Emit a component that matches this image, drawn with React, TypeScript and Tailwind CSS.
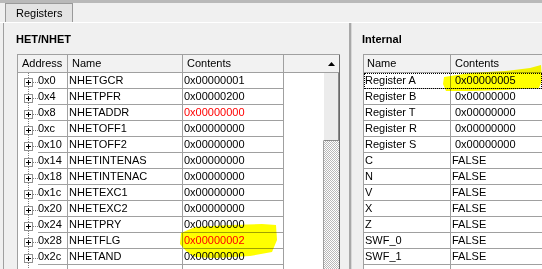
import React from 'react'

// registros del bloque HET/NHET
const hetRows = [
  { addr: '0x0', name: 'NHETGCR', value: '0x00000001' },
  { addr: '0x4', name: 'NHETPFR', value: '0x00000200' },
  { addr: '0x8', name: 'NHETADDR', value: '0x00000000', changed: true },
  { addr: '0xc', name: 'NHETOFF1', value: '0x00000000' },
  { addr: '0x10', name: 'NHETOFF2', value: '0x00000000' },
  { addr: '0x14', name: 'NHETINTENAS', value: '0x00000000' },
  { addr: '0x18', name: 'NHETINTENAC', value: '0x00000000' },
  { addr: '0x1c', name: 'NHETEXC1', value: '0x00000000' },
  { addr: '0x20', name: 'NHETEXC2', value: '0x00000000' },
  { addr: '0x24', name: 'NHETPRY', value: '0x00000000' },
  { addr: '0x28', name: 'NHETFLG', value: '0x00000002', changed: true },
  { addr: '0x2c', name: 'NHETAND', value: '0x00000000' },
  { addr: '', name: '', value: '' }
]

// registros internos
const internalRows = [
  { name: 'Register A', value: '0x00000005', reg: true },
  { name: 'Register B', value: '0x00000000', reg: true },
  { name: 'Register T', value: '0x00000000', reg: true },
  { name: 'Register R', value: '0x00000000', reg: true },
  { name: 'Register S', value: '0x00000000', reg: true },
  { name: 'C', value: 'FALSE' },
  { name: 'N', value: 'FALSE' },
  { name: 'V', value: 'FALSE' },
  { name: 'X', value: 'FALSE' },
  { name: 'Z', value: 'FALSE' },
  { name: 'SWF_0', value: 'FALSE' },
  { name: 'SWF_1', value: 'FALSE' },
  { name: '', value: '' }
]

function TreeNode() {
  return (
    <svg width="20" height="16" className="shrink-0 block">
      <line x1="10.5" y1="0" x2="10.5" y2="16" stroke="#808080" strokeDasharray="1 1" />
      <line x1="15" y1="9.5" x2="20" y2="9.5" stroke="#808080" strokeDasharray="1 1" />
      <rect x="6.5" y="5.5" width="8" height="8" fill="#fff" stroke="#919191" />
      <line x1="8" y1="9.5" x2="13" y2="9.5" stroke="#000" />
      <line x1="10.5" y1="7" x2="10.5" y2="12" stroke="#000" />
    </svg>
  )
}

export default function App() {
  return (
    <div className="relative w-[542px] h-[269px] overflow-hidden bg-[#f0f0f0] text-[11px] text-black font-['Liberation_Sans',Arial,sans-serif] flex flex-col">
      {/* barra superior */}
      <div className="h-[3px] bg-[#b9b9b9] shrink-0"></div>

      {/* pestañas */}
      <div className="h-[20px] shrink-0 flex items-end pl-[5px] border-b border-white">
        <div className="h-[19px] px-[10px] leading-[18px] border border-b-0 border-[#9a9a9a] bg-[#e3e3e3]">
          Registers
        </div>
      </div>

      <div className="flex flex-1 min-h-0">
        {/* panel HET/NHET */}
        <div className="ml-[3px] w-[346px] shrink-0 border-l border-[#a0a0a0] flex flex-col">
          <div className="h-[31px] shrink-0 pt-[10px] pl-[12px] leading-[13px] font-bold">HET/NHET</div>
          <div className="ml-[13px] w-[323px] flex-1 border-l border-t border-[#a0a0a0] flex">
            <div className="w-[305px] flex flex-col">
              {/* cabecera */}
              <div className="h-[18px] shrink-0 flex bg-[#f2f2f2] border-b border-[#a0a0a0] leading-[17px]">
                <div className="w-[50px] pl-[4px] border-r border-[#a0a0a0]">Address</div>
                <div className="w-[115px] pl-[4px] border-r border-[#a0a0a0]">Name</div>
                <div className="w-[101px] pl-[4px] border-r border-[#a0a0a0]">Contents</div>
                <div className="flex-1"></div>
              </div>
              <div className="flex-1 bg-white">
                {hetRows.map((row, i) => (
                  <div key={i} className="h-[16px] flex leading-[15px]">
                    <div className="w-[50px] flex border-r border-[#a0a0a0]">
                      <TreeNode />
                      <div className="flex-1 border-b border-[#a0a0a0]">{row.addr}</div>
                    </div>
                    <div className="w-[115px] pl-[1px] border-r border-b border-[#a0a0a0]">{row.name}</div>
                    <div
                      className={
                        row.changed
                          ? 'w-[101px] pl-[1px] border-r border-b border-[#a0a0a0] text-[#ff0000]'
                          : 'w-[101px] pl-[1px] border-r border-b border-[#a0a0a0]'
                      }
                    >
                      {row.value}
                    </div>
                    <div className="flex-1"></div>
                  </div>
                ))}
              </div>
            </div>

            {/* barra de desplazamiento */}
            <div className="w-[17px] flex flex-col border-r border-[#696969]">
              <div className="h-[18px] shrink-0 bg-[#f2f2f2] border-b border-[#a0a0a0] flex items-center justify-center">
                <svg width="7" height="4">
                  <polygon points="0,4 3.5,0 7,4" fill="#000" />
                </svg>
              </div>
              <div className="h-[68px] shrink-0 bg-[#ececec] border-l border-white border-b border-b-[#8a8a8a] border-r border-r-[#8a8a8a]"></div>
              <div className="flex-1 border-l border-[#a0a0a0] [background:repeating-conic-gradient(#b8b8b8_0_25%,#ffffff_0_50%)_0_0/2px_2px]"></div>
            </div>
          </div>
        </div>

        {/* separador */}
        <div className="w-[3px] shrink-0 bg-[#a8a8a8] border-r border-[#d8d8d8]"></div>

        {/* panel Internal */}
        <div className="flex-1 flex flex-col min-w-0">
          <div className="h-[31px] shrink-0 pt-[10px] pl-[10px] leading-[13px] font-bold">Internal</div>
          <div className="ml-[11px] flex-1 border-l border-t border-[#a0a0a0] flex flex-col">
            <div className="h-[18px] shrink-0 flex bg-[#f2f2f2] border-b border-[#a0a0a0] leading-[17px]">
              <div className="w-[87px] pl-[3px] border-r border-[#a0a0a0]">Name</div>
              <div className="flex-1 pl-[4px]">Contents</div>
            </div>
            <div className="flex-1 bg-white">
              {internalRows.map((row, i) => (
                <div
                  key={i}
                  className={
                    i === 0
                      ? 'h-[16px] flex leading-[15px] outline-1 outline-dotted outline-black -outline-offset-1'
                      : 'h-[16px] flex leading-[15px]'
                  }
                >
                  <div className="w-[87px] pl-[1px] border-r border-b border-[#a0a0a0]">{row.name}</div>
                  <div
                    className={
                      row.reg
                        ? 'flex-1 pl-[4px] border-b border-[#a0a0a0]'
                        : 'flex-1 pl-[1px] border-b border-[#a0a0a0]'
                    }
                  >
                    {row.value}
                  </div>
                </div>
              ))}
            </div>
          </div>
        </div>
      </div>

      {/* marcas amarillas sobre la captura */}
      <svg className="absolute left-0 top-0 pointer-events-none mix-blend-multiply" width="542" height="269">
        <polygon
          points="444,77 470,73 505,71 530,68 541,65 542,80 539,88 505,90 470,91 446,91 443,84"
          fill="#ffff00"
        />
        <polygon
          points="181,233 195,227 230,225 262,224 276,225 277,240 272,252 250,256 215,258 195,257 186,251 180,244"
          fill="#ffff00"
        />
      </svg>
    </div>
  )
}
